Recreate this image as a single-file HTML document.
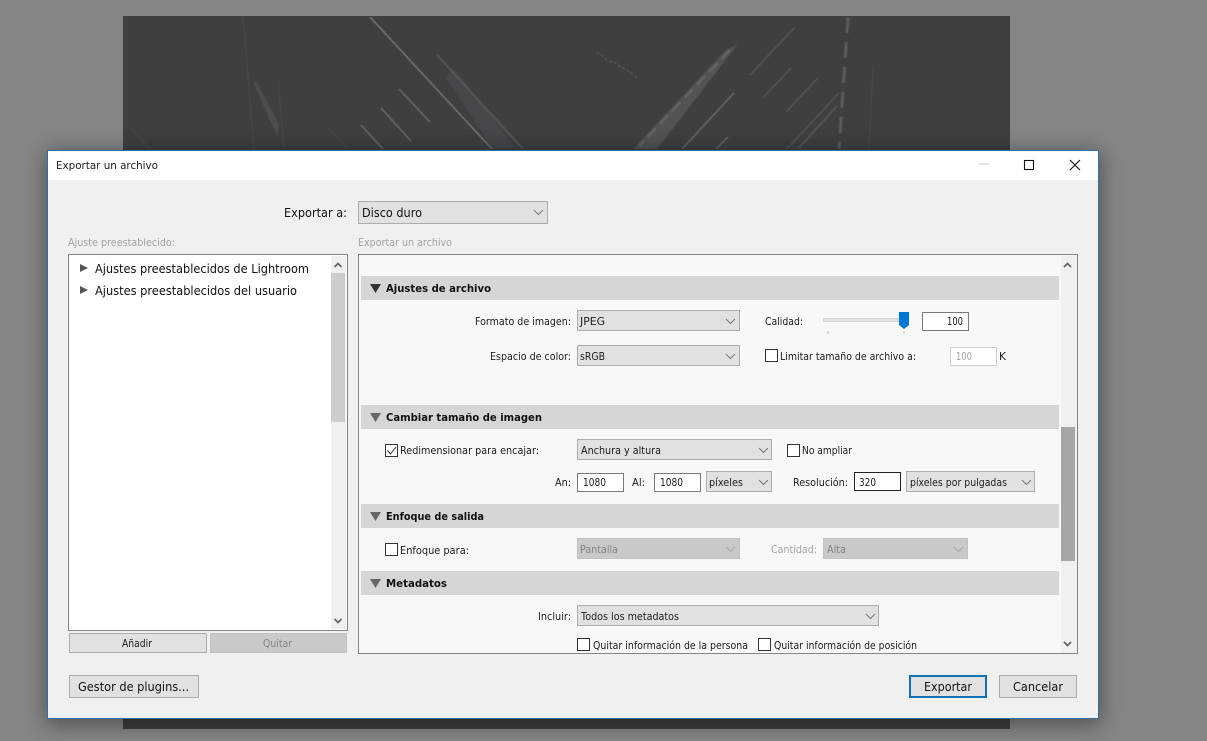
<!DOCTYPE html>
<html lang="es"><head><meta charset="utf-8"><title>Exportar un archivo</title>
<style>
html,body{margin:0;padding:0;background:#858585;width:1207px;height:741px;overflow:hidden}
svg{display:block}
text{font-family:"DejaVu Sans","Liberation Sans",sans-serif;font-size:11px;fill:#1c1c1c}
.b{font-weight:bold;fill:#111}
.l{font-size:12px;fill:#111}
.g{fill:#a3a3a3}
.d{fill:#858585}
.dd{fill:#e1e1e1;stroke:#adadad;stroke-width:1}
.dis{fill:#c9c9c9;stroke:#c2c2c2;stroke-width:1}
.in{fill:#fff;stroke:#7a7a7a;stroke-width:1}
.cb{fill:#fff;stroke:#333;stroke-width:1}
.ch{fill:none;stroke:#777;stroke-width:1}
.chd{fill:none;stroke:#aaa;stroke-width:1}
.ar{fill:none;stroke:#666;stroke-width:1.8}
.tri{fill:#555}
.f1{stroke:#4a4a4a;stroke-width:1;fill:none}
.f2{stroke:#7c7c7c;stroke-width:1;fill:none}
.f3{stroke:#5f5f5f;stroke-width:1;fill:none}
</style></head><body>
<svg width="1207" height="741" viewBox="0 0 1207 741" xmlns="http://www.w3.org/2000/svg">
<defs>
<filter id="sh" x="-10%" y="-10%" width="120%" height="120%"><feGaussianBlur stdDeviation="11"/></filter>
<filter id="soft" x="0" y="0" width="100%" height="100%"><feGaussianBlur stdDeviation="0.55"/></filter>
</defs>
<rect width="1207" height="741" fill="#858585"/>
<!-- background photo -->
<rect x="123" y="16" width="887" height="713" fill="#3f3f3f"/>
<g filter="url(#soft)">
<polygon points="445,77 493,149 517,149 455,70" fill="#464748"/>
<path d="M437 55L523 149" stroke="#575757" stroke-width="2" fill="none"/>
<path d="M370 17L492 149" stroke="#8e8e8e" stroke-width="1" fill="none"/>
<path class="f2" d="M399 89L430 122M381 108L411 141M361 125L383 149"/>
<path class="f1" d="M327 127L348 149M243 17L254 149M278 80L284 149M130 128L150 149M873 67L869 149"/>
<polygon points="253,82 257,82 279,125 277,136" fill="#4d4d4d"/>
<polygon points="738,44 726,50 633,149 657,149" fill="#535353"/>
<path d="M730 50L640 145" stroke="#666" stroke-width="2" stroke-dasharray="12 6" fill="none"/>
<path d="M597 52l10 8 8 3 10 6 8 5 5 5" stroke="#565656" stroke-width="1.600" stroke-dasharray="3 2" fill="none"/>
<path class="f3" d="M750 75L795 27M763 98L791 68M786 112L817 79"/>
<path class="f2" d="M682 149L734 93M716 149L728 137"/>
<path class="f3" d="M787 149L839 93"/>
<path d="M798 149L837 106" stroke="#545454" stroke-width="2" fill="none"/>
<path d="M848 17L839 149" stroke="#5c5c5c" stroke-width="3" stroke-dasharray="16 9" fill="none"/>
</g>
<!-- dialog shadow -->
<rect x="47" y="152" width="1053" height="572" fill="#000" opacity=".42" filter="url(#sh)"/>
<!-- dialog -->
<rect x="47" y="150" width="1052" height="569" fill="#2f6fa5"/>
<rect x="48" y="151" width="1050" height="567" fill="#f0f0f0"/>
<rect x="48" y="151" width="1050" height="29" fill="#fff"/>
<text x="56" y="169" textLength="102" lengthAdjust="spacingAndGlyphs">Exportar un archivo</text>
<path d="M979 164H989" stroke="#c8c8c8" stroke-width="1"/>
<rect x="1024.500" y="160.500" width="9" height="9" fill="none" stroke="#111" stroke-width="1.100"/>
<path d="M1070 160L1080 170M1080 160L1070 170" stroke="#111" stroke-width="1.100"/>

<text class="l" x="284" y="217" textLength="63" lengthAdjust="spacingAndGlyphs">Exportar a:</text>
<rect class="dd" x="358.500" y="201.500" width="189" height="22"/>
<text class="l" x="362" y="217" textLength="60" lengthAdjust="spacingAndGlyphs">Disco duro</text>
<path d="M534 210l4.500 4.500 4.500-4.500" class="ch"/>
<text class="g" x="68" y="246" textLength="107" lengthAdjust="spacingAndGlyphs">Ajuste preestablecido:</text>
<text class="g" x="358" y="246" textLength="94" lengthAdjust="spacingAndGlyphs">Exportar un archivo</text>

<!-- left panel -->
<rect x="68.500" y="254.500" width="279" height="376" fill="#fff" stroke="#858585"/>
<rect x="331" y="256" width="15" height="373" fill="#f0f0f0"/>
<rect x="331" y="273" width="14" height="149" fill="#cdcdcd"/>
<path class="ar" d="M334.500 267l3.500-3.500 3.500 3.500M334.500 619l3.500 3.500 3.500-3.500"/>
<polygon class="tri" points="80,264 88,268 80,272"/>
<polygon class="tri" points="80,286 88,290 80,294"/>
<text class="l" x="95" y="273" textLength="214" lengthAdjust="spacingAndGlyphs">Ajustes preestablecidos de Lightroom</text>
<text class="l" x="95" y="295" textLength="202" lengthAdjust="spacingAndGlyphs">Ajustes preestablecidos del usuario</text>

<rect class="dd" x="69.500" y="633.500" width="137" height="19"/>
<text x="122" y="647" textLength="30" lengthAdjust="spacingAndGlyphs">Añadir</text>
<rect class="dis" x="210.500" y="633.500" width="136" height="19"/>
<text class="d" x="263" y="647" textLength="29" lengthAdjust="spacingAndGlyphs">Quitar</text>

<!-- right panel -->
<rect x="358.500" y="254.500" width="719" height="399" fill="#f8f8f8" stroke="#858585"/>
<rect x="1061" y="256" width="16" height="397" fill="#f0f0f0"/>
<rect x="1061" y="427" width="14" height="134" fill="#a6a6a6"/>
<path class="ar" d="M1064 267l3.500-3.500 3.500 3.500M1064 642l3.500 3.500 3.500-3.500"/>

<rect x="361" y="276" width="698" height="24" fill="#d6d6d6"/>
<rect x="361" y="405" width="698" height="24" fill="#d6d6d6"/>
<rect x="361" y="504" width="698" height="24" fill="#d6d6d6"/>
<rect x="361" y="571" width="698" height="24" fill="#d6d6d6"/>
<polygon points="370,284 381,284 375.500,293" fill="#333"/>
<polygon points="370,413 381,413 375.500,422" fill="#666"/>
<polygon points="370,512 381,512 375.500,521" fill="#666"/>
<polygon points="370,579 381,579 375.500,588" fill="#666"/>
<text class="b" x="386" y="292" textLength="105" lengthAdjust="spacingAndGlyphs">Ajustes de archivo</text>
<text class="b" x="386" y="421" textLength="156" lengthAdjust="spacingAndGlyphs">Cambiar tamaño de imagen</text>
<text class="b" x="386" y="520" textLength="98" lengthAdjust="spacingAndGlyphs">Enfoque de salida</text>
<text class="b" x="386" y="587" textLength="61" lengthAdjust="spacingAndGlyphs">Metadatos</text>

<!-- Ajustes de archivo -->
<text x="475" y="325" textLength="96" lengthAdjust="spacingAndGlyphs">Formato de imagen:</text>
<rect class="dd" x="577.500" y="310.500" width="162" height="20"/>
<text x="580" y="325" textLength="25" lengthAdjust="spacingAndGlyphs">JPEG</text>
<path class="ch" d="M726 319l4.500 4.500 4.500-4.500"/>
<text x="490" y="360" textLength="81" lengthAdjust="spacingAndGlyphs">Espacio de color:</text>
<rect class="dd" x="577.500" y="345.500" width="162" height="20"/>
<text x="580" y="360" textLength="25" lengthAdjust="spacingAndGlyphs">sRGB</text>
<path class="ch" d="M726 354l4.500 4.500 4.500-4.500"/>
<text x="765" y="325" textLength="38" lengthAdjust="spacingAndGlyphs">Calidad:</text>
<rect x="823.500" y="318.500" width="80" height="3" fill="#e2e2e2" stroke="#d4d4d4"/>
<path d="M899 312H909V325L904 329L899 325Z" fill="#0078d7"/>
<path d="M828 331V334M904 331V334" stroke="#c4c4c4"/>
<rect class="in" x="922.500" y="312.500" width="46" height="18"/>
<text x="947" y="325" textLength="16" lengthAdjust="spacingAndGlyphs">100</text>
<rect class="cb" x="765.500" y="349.500" width="12" height="12"/>
<text x="780" y="360" textLength="136" lengthAdjust="spacingAndGlyphs">Limitar tamaño de archivo a:</text>
<rect x="950.500" y="347.500" width="46" height="18" fill="#fff" stroke="#cfcfcf"/>
<text class="g" x="956" y="360" textLength="16" lengthAdjust="spacingAndGlyphs">100</text>
<text x="999" y="360" textLength="7" lengthAdjust="spacingAndGlyphs">K</text>

<!-- Cambiar tamaño -->
<rect class="cb" x="385.500" y="444.500" width="12" height="12"/>
<path d="M387.500 450.500l3 3.500 5.500-7" fill="none" stroke="#333" stroke-width="1"/>
<text x="400" y="454" textLength="139" lengthAdjust="spacingAndGlyphs">Redimensionar para encajar:</text>
<rect class="dd" x="577.500" y="439.500" width="194" height="20"/>
<text x="581" y="454" textLength="80" lengthAdjust="spacingAndGlyphs">Anchura y altura</text>
<path class="ch" d="M759 448l4.500 4.500 4.500-4.500"/>
<rect class="cb" x="787.500" y="444.500" width="12" height="12"/>
<text x="802" y="454" textLength="50" lengthAdjust="spacingAndGlyphs">No ampliar</text>
<text x="555" y="486" textLength="16" lengthAdjust="spacingAndGlyphs">An:</text>
<rect class="in" x="577.500" y="473.500" width="46" height="18"/>
<text x="583" y="486" textLength="23" lengthAdjust="spacingAndGlyphs">1080</text>
<text x="632" y="486" textLength="13" lengthAdjust="spacingAndGlyphs">Al:</text>
<rect class="in" x="654.500" y="473.500" width="46" height="18"/>
<text x="660" y="486" textLength="23" lengthAdjust="spacingAndGlyphs">1080</text>
<rect class="dd" x="706.500" y="471.500" width="65" height="20"/>
<text x="709" y="486" textLength="34" lengthAdjust="spacingAndGlyphs">píxeles</text>
<path class="ch" d="M759 480l4.500 4.500 4.500-4.500"/>
<text x="793" y="486" textLength="55" lengthAdjust="spacingAndGlyphs">Resolución:</text>
<rect x="854.500" y="472.500" width="46" height="18" fill="#fff" stroke="#222"/>
<text x="859" y="486" textLength="17" lengthAdjust="spacingAndGlyphs">320</text>
<rect class="dd" x="906.500" y="471.500" width="128" height="20"/>
<text x="910" y="486" textLength="97" lengthAdjust="spacingAndGlyphs">píxeles por pulgadas</text>
<path class="ch" d="M1022 480l4.500 4.500 4.500-4.500"/>

<!-- Enfoque -->
<rect class="cb" x="385.500" y="543.500" width="12" height="12"/>
<text x="400" y="554" textLength="69" lengthAdjust="spacingAndGlyphs">Enfoque para:</text>
<rect class="dis" x="577.500" y="538.500" width="162" height="20"/>
<text class="d" x="580" y="553" textLength="38" lengthAdjust="spacingAndGlyphs">Pantalla</text>
<path class="chd" d="M726 547l4.500 4.500 4.500-4.500"/>
<text class="g" x="771" y="553" textLength="46" lengthAdjust="spacingAndGlyphs">Cantidad:</text>
<rect class="dis" x="823.500" y="538.500" width="144" height="20"/>
<text class="d" x="827" y="553" textLength="19" lengthAdjust="spacingAndGlyphs">Alta</text>
<path class="chd" d="M954 547l4.500 4.500 4.500-4.500"/>

<!-- Metadatos -->
<text x="538" y="620" textLength="33" lengthAdjust="spacingAndGlyphs">Incluir:</text>
<rect class="dd" x="577.500" y="605.500" width="301" height="20"/>
<text x="581" y="620" textLength="98" lengthAdjust="spacingAndGlyphs">Todos los metadatos</text>
<path class="ch" d="M866 614l4.500 4.500 4.500-4.500"/>
<rect class="cb" x="577.500" y="638.500" width="12" height="12"/>
<text x="593" y="649" textLength="155" lengthAdjust="spacingAndGlyphs">Quitar información de la persona</text>
<rect class="cb" x="758.500" y="638.500" width="12" height="12"/>
<text x="774" y="649" textLength="143" lengthAdjust="spacingAndGlyphs">Quitar información de posición</text>

<!-- footer -->
<rect class="dd" x="69.500" y="675.500" width="129" height="22"/>
<text class="l" x="78" y="691" textLength="111" lengthAdjust="spacingAndGlyphs">Gestor de plugins...</text>
<rect x="910" y="676" width="76" height="21" fill="#e1e1e1" stroke="#1272b5" stroke-width="2"/>
<text class="l" x="924" y="691" textLength="48" lengthAdjust="spacingAndGlyphs">Exportar</text>
<rect class="dd" x="999.500" y="675.500" width="77" height="22"/>
<text class="l" x="1013" y="691" textLength="50" lengthAdjust="spacingAndGlyphs">Cancelar</text>
</svg>
</body></html>
